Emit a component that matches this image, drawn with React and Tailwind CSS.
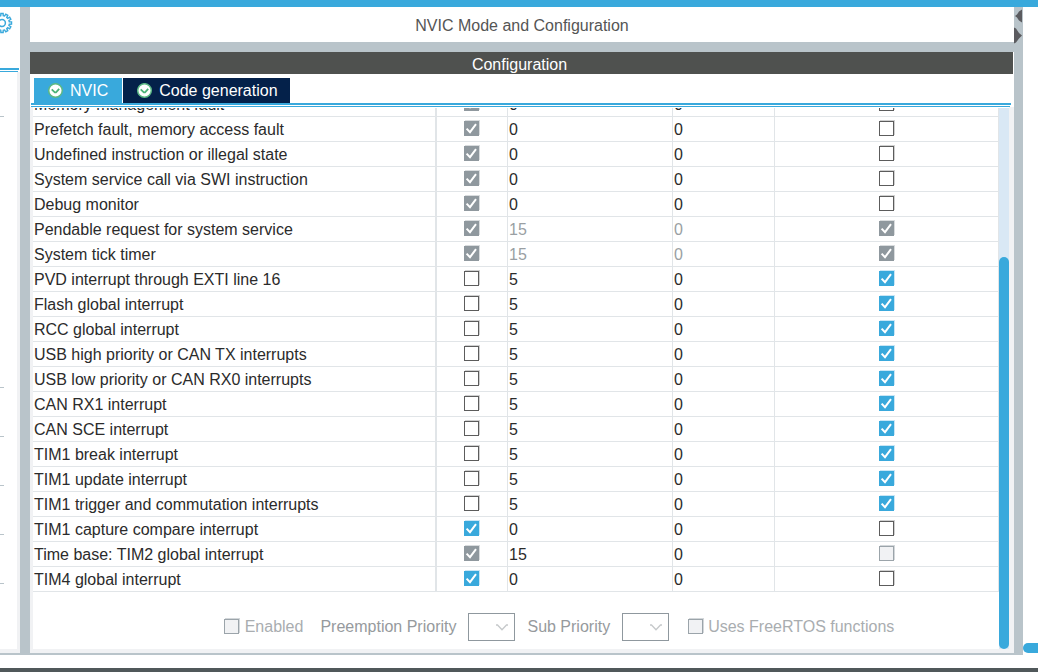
import React from "react";

const rows = [
  ["Memory management fault", "locked", "0", "0", "off"],
  ["Prefetch fault, memory access fault", "locked", "0", "0", "off"],
  ["Undefined instruction or illegal state", "locked", "0", "0", "off"],
  ["System service call via SWI instruction", "locked", "0", "0", "off"],
  ["Debug monitor", "locked", "0", "0", "off"],
  ["Pendable request for system service", "locked", "15", "0", "locked"],
  ["System tick timer", "locked", "15", "0", "locked"],
  ["PVD interrupt through EXTI line 16", "off", "5", "0", "on"],
  ["Flash global interrupt", "off", "5", "0", "on"],
  ["RCC global interrupt", "off", "5", "0", "on"],
  ["USB high priority or CAN TX interrupts", "off", "5", "0", "on"],
  ["USB low priority or CAN RX0 interrupts", "off", "5", "0", "on"],
  ["CAN RX1 interrupt", "off", "5", "0", "on"],
  ["CAN SCE interrupt", "off", "5", "0", "on"],
  ["TIM1 break interrupt", "off", "5", "0", "on"],
  ["TIM1 update interrupt", "off", "5", "0", "on"],
  ["TIM1 trigger and commutation interrupts", "off", "5", "0", "on"],
  ["TIM1 capture compare interrupt", "on", "0", "0", "off"],
  ["Time base: TIM2 global interrupt", "locked", "15", "0", "disabled"],
  ["TIM4 global interrupt", "on", "0", "0", "off"],
];

const boxStyles = {
  off: "border border-[#5c5c5c] bg-white shadow-[1px_-1px_0_#d0d0d0]",
  on: "bg-[#39a9dc] shadow-[1px_-1px_0_#c9e6f5]",
  locked: "bg-[#8f989e] shadow-[1px_-1px_0_#d9dcde]",
  disabled: "border border-[#9ba4aa] bg-[#f1f2f4] shadow-[1px_-1px_0_#d3d7da]",
};

function Check({ state, ...rest }) {
  const checked = state === "on" || state === "locked";
  return (
    <span className="relative block size-4 shrink-0">
      <input
        type="checkbox"
        defaultChecked={checked}
        disabled={state === "locked" || state === "disabled"}
        className={"block size-[15px] appearance-none " + boxStyles[state]}
        {...rest}
      />
      {checked && (
        <svg viewBox="0 0 16 16" className="pointer-events-none absolute inset-0 size-4" fill="none" stroke="white" strokeWidth="2">
          <path d="M2.6 7.6 6 11.2 12 3.2" />
        </svg>
      )}
    </span>
  );
}

function TabIcon() {
  return (
    <svg viewBox="0 0 16 16" className="size-4" aria-hidden="true">
      <circle cx="7.500" cy="7.500" r="6.800" fill="white" stroke="#5cb985" strokeWidth="1.500" />
      <path d="M3.700 6.400 6.800 9.300H8L11.200 5.800" fill="none" stroke="#4db378" strokeWidth="1.800" />
    </svg>
  );
}

const gearOutline =
  Array.from({ length: 12 }, (_, i) =>
    [[-0.17, 7.4], [-0.12, 9.6], [0.12, 9.6], [0.17, 7.4]]
      .map(([offset, radius]) => {
        const angle = (i * Math.PI) / 6 + offset;
        return (12 + radius * Math.cos(angle)).toFixed(2) + " " + (12 + radius * Math.sin(angle)).toFixed(2);
      })
      .join("L")
  ).join("L");

function Gear() {
  return (
    <svg viewBox="0 0 24 24" className="size-6" fill="none" stroke="#39a9dc" aria-hidden="true">
      <path d={"M" + gearOutline + "Z"} strokeWidth="1.4" />
      <circle cx="12" cy="12" r="3.4" strokeWidth="1.5" />
    </svg>
  );
}

function DoubleLine() {
  return (
    <div>
      <div className="h-0.5 bg-[#39a9dc]" />
      <div className="mt-px mr-px h-px bg-[#39a9dc]" />
    </div>
  );
}

function Combo({ id }) {
  return (
    <span className="relative block h-7 w-[47px]">
      <select id={id} disabled className="block h-7 w-full appearance-none border border-[#8f989e] bg-white" />
      <svg viewBox="0 0 14 8" className="pointer-events-none absolute top-[11px] right-1.5 h-2 w-3.5" fill="none" stroke="#c6c9cb" strokeWidth="1.3">
        <path d="M1 1h1.5L7 5.8 11.500 1H13" />
      </svg>
    </span>
  );
}

function NumberCell({ children, muted }) {
  return (
    <td className={"border-r border-b border-[#e1e5e8] p-0 pl-px leading-[23px] " + (muted ? "pt-px text-[#9a9fa3]" : "pt-px text-[#2b2b2b]")}>
      {children}
    </td>
  );
}

export default function App() {
  return (
    <div className="flex h-screen flex-col overflow-hidden bg-white font-['Liberation_Sans',Arial,sans-serif] text-base leading-6 text-[#333]">
      <div className="h-[7px] shrink-0 bg-[#39a9dc]" />
      <div className="flex min-h-0 flex-1">
        <div className="flex min-w-0 flex-1 flex-col border-b-2 border-[#b9c4ca]">
          <div className="flex min-h-0 flex-1">
            <aside className="flex w-5 shrink-0 flex-col overflow-hidden">
              <div className="flex h-[61px] shrink-0 justify-end pt-1 pr-1.5">
                <button type="button" aria-label="Settings" className="size-6 shrink-0"><Gear /></button>
              </div>
              <div className="mr-px"><DoubleLine /></div>
              <div className="flex flex-1 flex-col border-r-[3px] border-b-4 border-[#f1f2f4] pt-11">
                <div className="h-px w-1 bg-[#b9c4ca]" />
                <div className="mt-[270px] flex flex-col gap-12">
                  {[0, 1, 2, 3, 4].map((i) => (
                    <div key={i} className="h-px w-1 bg-[#b9c4ca]" />
                  ))}
                </div>
              </div>
            </aside>
            <div className="w-2.5 shrink-0 bg-[#b9c4ca]" />
            <main className="flex min-w-0 flex-1 flex-col">
              <h1 className="h-[35px] shrink-0 pt-[7px] text-center text-[#555]">NVIC Mode and Configuration</h1>
              <div className="h-2.5 shrink-0 bg-[#b9c4ca]" />
              <h2 className="mr-px h-[22px] shrink-0 bg-[#4f514f] pt-px pr-1 text-center leading-6 text-white">Configuration</h2>
              <div role="tablist" className="flex shrink-0 gap-px pt-1 pl-1">
                <button type="button" role="tab" aria-selected="true" className="flex h-[25px] items-center gap-1.5 bg-[#39a9dc] pr-3.5 pl-3.5 text-white">
                  <TabIcon />NVIC
                </button>
                <button type="button" role="tab" aria-selected="false" className="flex h-[25px] items-center gap-1.5 bg-[#04214a] pr-3 pl-3.5 text-white">
                  <TabIcon />Code generation
                </button>
              </div>
              <div className="mr-[3px] ml-px"><DoubleLine /></div>
              <div className="flex min-h-0 flex-1 border-r-[5px] border-b-4 border-l-[3px] border-[#f1f2f4] pt-px">
                <div className="min-w-0 flex-1 overflow-hidden">
                  <div className="overflow-hidden">
                    <table className="-mt-4 w-full table-fixed border-separate border-spacing-0 text-left">
                      <colgroup>
                        <col />
                        <col className="w-[71px]" />
                        <col className="w-[165px]" />
                        <col className="w-[102px]" />
                        <col className="w-[224px]" />
                      </colgroup>
                      <tbody>
                        {rows.map(([name, enabled, pre, sub, rtos]) => (
                          <tr key={name} className="h-[25px]">
                            <td className="border-r-2 border-b border-[#e1e5e8] p-0 pt-px pl-px leading-[23px] text-[#2b2b2b]">{name}</td>
                            <td className="border-r border-b border-[#e1e5e8] p-0">
                              <div className="flex justify-center"><Check state={enabled} aria-label={name + " enabled"} /></div>
                            </td>
                            <NumberCell muted={rtos === "locked"}>{pre}</NumberCell>
                            <NumberCell muted={rtos === "locked"}>{sub}</NumberCell>
                            <td className="border-r border-b border-[#e1e5e8] p-0">
                              <div className="flex justify-center"><Check state={rtos} aria-label={name + " uses FreeRTOS functions"} /></div>
                            </td>
                          </tr>
                        ))}
                      </tbody>
                    </table>
                  </div>
                  <div className="flex items-center justify-center pt-[21px] pl-[86px] whitespace-nowrap text-[#a9adb0]">
                    <Check state="disabled" id="enabled" />
                    <label htmlFor="enabled" className="ml-[5px]">Enabled</label>
                    <label htmlFor="preemption" className="ml-[17px] text-[#969a9d]">Preemption Priority</label>
                    <div className="ml-3"><Combo id="preemption" /></div>
                    <label htmlFor="sub" className="ml-3 text-[#969a9d]">Sub Priority</label>
                    <div className="ml-3"><Combo id="sub" /></div>
                    <div className="ml-[19px]"><Check state="disabled" id="rtos" /></div>
                    <label htmlFor="rtos" className="ml-1">Uses FreeRTOS functions</label>
                  </div>
                </div>
                <div className="flex w-2.5 shrink-0 flex-col justify-end bg-[#d9e8f5]">
                  <div className="h-[392px] rounded-full bg-[#39a9dc]" />
                </div>
              </div>
            </main>
            <div className="flex w-[9px] shrink-0 flex-col bg-[#b9c4ca]">
              <svg viewBox="0 0 9 40" className="h-10 w-[9px]" fill="#5b5b5f" aria-hidden="true">
                <path d="M8 2.500V15.500L5 13.500 3 10.500 1 9 3 7.500 5 4.500Z" />
                <path d="M0 20.500 2 21.500 5 26 8 28.500 5 31.500 2 35.500 0 36.500Z" />
              </svg>
            </div>
          </div>
        </div>
        <div className="flex w-[15px] shrink-0 flex-col justify-end pb-0.5">
          <div className="h-2.5 rounded-l-full bg-[#39a9dc]" />
        </div>
      </div>
      <div className="mt-[13px] h-1 shrink-0 bg-[#50585a]" />
    </div>
  );
}
